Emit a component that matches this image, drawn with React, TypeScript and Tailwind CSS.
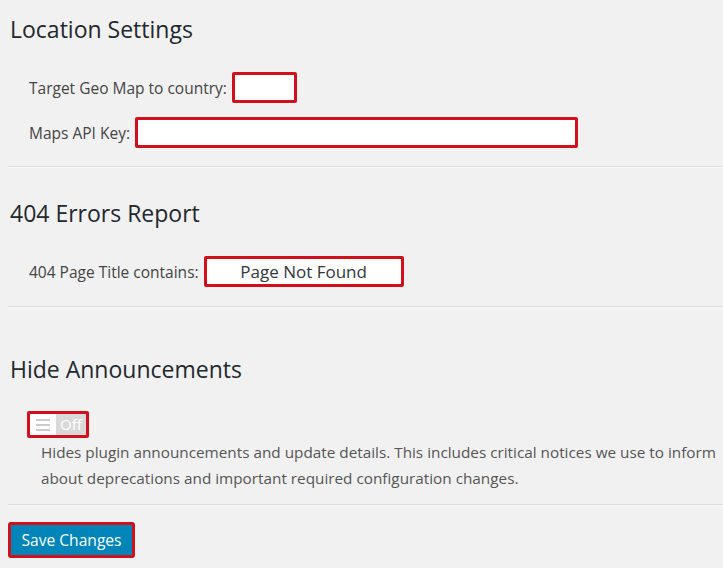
export default function App() {
  return (
    <div className="min-h-screen bg-[#f1f1f1] pl-2 pt-[14px] font-['Open_Sans',sans-serif] text-[#23282d]">
      <h2 className="pl-[2px] text-[23px] leading-[30px]">Location Settings</h2>
      <div className="mt-[28px] flex items-center gap-[5px] pl-[21px] text-[15.5px] text-[#444]">
        <span className="pt-[3px]">Target Geo Map to country:</span>
        <div className="h-[31px] w-[65px] rounded-[2px] border-[3px] border-[#d0101b] bg-white" />
      </div>
      <div className="mt-[14px] flex items-center gap-[5px] pl-[21px] text-[15.5px] text-[#444]">
        <span className="pt-[2px]">Maps API Key:</span>
        <div className="h-[31px] w-[443px] rounded-[2px] border-[3px] border-[#d0101b] bg-white" />
      </div>
      <div className="mt-[18px] border-t border-b border-t-[#dcdcdc] border-b-[#f9f9f9]" />

      <h2 className="mt-[30px] pl-[2px] text-[23px] leading-[30px]">404 Errors Report</h2>
      <div className="mt-[28px] flex items-center gap-[5px] pl-[21px] text-[15.5px] text-[#444]">
        <span className="pt-[2px]">404 Page Title contains:</span>
        <div className="flex h-[31px] w-[200px] items-center justify-center rounded-[2px] border-[3px] border-[#d0101b] bg-white text-[17px] text-[#32373c]">
          Page Not Found
        </div>
      </div>
      <div className="mt-[19px] border-t border-b border-t-[#dcdcdc] border-b-[#f9f9f9]" />

      <h2 className="mt-[46px] pl-[2px] text-[23px] leading-[30px]">Hide Announcements</h2>
      <div className="ml-[19px] mt-[27px] flex h-[27px] w-[62px] rounded-[2px] border-[3px] border-[#d0101b]">
        <div className="flex w-[26px] flex-col items-center justify-center gap-[3px] bg-white">
          <span className="h-[2px] w-[14px] bg-[#ccc]" />
          <span className="h-[2px] w-[14px] bg-[#ccc]" />
          <span className="h-[2px] w-[14px] bg-[#ccc]" />
        </div>
        <div className="flex flex-1 items-center justify-center bg-[#d9d9d9] text-[15px] text-white">Off</div>
      </div>
      <p className="mt-[1px] whitespace-nowrap pl-[33px] text-[15.3px] leading-[26px] text-[#555]">
        Hides plugin announcements and update details. This includes critical notices we use to inform
        <br />
        about deprecations and important required configuration changes.
      </p>
      <div className="mt-[13px] border-t border-b border-t-[#dcdcdc] border-b-[#f9f9f9]" />

      <div className="mt-[16px] w-[127px] rounded-[3px] border-[3px] border-[#d0101b]">
        <button className="h-[30px] w-full bg-[#0085ba] pt-[2px] text-[15.6px] text-white">Save Changes</button>
      </div>
    </div>
  )
}
